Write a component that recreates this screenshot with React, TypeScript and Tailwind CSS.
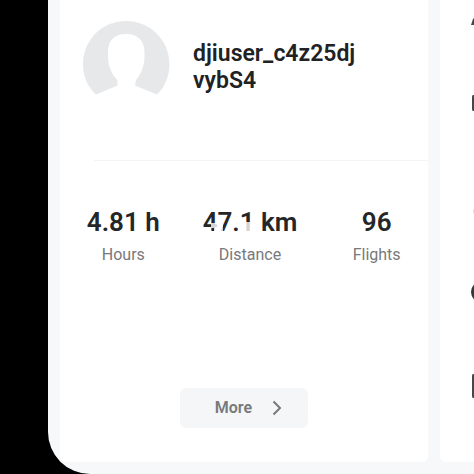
import React from "react";

interface Stat {
  value: string;
  label: string;
  smudged?: boolean;
}

const stats: Stat[] = [
  { value: "4.81 h", label: "Hours" },
  { value: "47.1 km", label: "Distance", smudged: true },
  { value: "96", label: "Flights" },
];

const Avatar = () => (
  <svg width="88" height="76" viewBox="0 0 88 76" className="shrink-0" aria-hidden="true">
    <path
      d="M14 74.5C5.500 67 1 56 1 44.500C1 20 20 1 44 1S87.500 20 87.500 44.500C87.500 56 83 67 75 74.500L53 65.500L54 60C58.500 55 62 47 62.500 38V31C62 20 55 14 44 14S26.500 20 26 31V38C26.500 47 30 55 35.500 60V65.500Z"
      fill="#e6e8ea"
    />
  </svg>
);

const MenuIcons = () => (
  <div className="flex flex-col items-end" aria-hidden="true">
    <svg width="4" height="94" viewBox="0 0 4 94">
      <path d="M4 18V25H1L3 19Z" fill="#454748" />
    </svg>
    <svg width="4" height="106" viewBox="0 0 4 106">
      <path d="M4 1H3Q2 1 2 3V15Q2 17 3 17H4Z" fill="#454748" />
    </svg>
    <svg width="4" height="80" viewBox="0 0 4 80">
      <path d="M4 9H3V13H4Z" fill="#e0e1e2" />
    </svg>
    <svg width="4" height="94" viewBox="0 0 4 94">
      <circle cx="12" cy="12" r="11" fill="#353839" />
    </svg>
    <svg width="4" height="26" viewBox="0 0 4 26">
      <path d="M4 0H3Q2 0 2 2V22Q2 24 3 24H4Z" fill="#454748" />
    </svg>
  </div>
);

const App = () => {
  return (
    <div className="min-h-screen bg-black pl-12 font-['Roboto',sans-serif]">
      <main className="flex min-h-screen gap-3 overflow-hidden rounded-bl-[42px] bg-[#f7f8fa] pb-3 pl-3">
        <section className="flex min-w-0 flex-1 flex-col rounded-b-md bg-white">
          <div className="flex h-40 items-start gap-[23px] pl-[22px] pt-5">
            <Avatar />
            <h1 className="w-44 pt-5 text-[23px] font-semibold leading-[27px] text-[#202223]">
              djiuser_c4z25dj
              <br />
              vybS4
            </h1>
          </div>
          <hr className="ml-[34px] border-[#f3f4f5]" />

          <dl className="-mr-3 grid grid-cols-3 pt-11 text-center">
            {stats.map((stat) => (
              <div key={stat.label} className="flex flex-col-reverse">
                <dt className="text-base leading-6 text-[#77797b]">{stat.label}</dt>
                <dd className="relative pb-1 text-[26px] font-semibold leading-[34px] text-[#242627]">
                  {stat.value}
                  {stat.smudged && (
                    <svg
                      className="absolute left-6 top-4 h-3 w-12"
                      viewBox="0 0 48 12"
                      aria-hidden="true"
                    >
                      <path d="M0 2H5V0H12V10H3V7H0ZM32 1H40V10H32Z" fill="#fff" opacity="0.8" />
                    </svg>
                  )}
                </dd>
              </div>
            ))}
          </dl>

          <div className="mt-auto flex justify-center pb-[34px]">
            <button
              type="button"
              className="flex h-10 w-32 items-center justify-end gap-5 rounded-md bg-[#f4f6f8] pr-[26px] text-base font-semibold text-[#77797b]"
            >
              More
              <svg width="10" height="16" viewBox="0 0 10 16" fill="none" aria-hidden="true">
                <path d="M1.500 1.500L8 8L1.500 14.500" stroke="#77797b" strokeWidth="2" />
              </svg>
            </button>
          </div>
        </section>

        <aside className="w-[34px] shrink-0 rounded-bl-md bg-white">
          <MenuIcons />
        </aside>
      </main>
    </div>
  );
};

export default App;
